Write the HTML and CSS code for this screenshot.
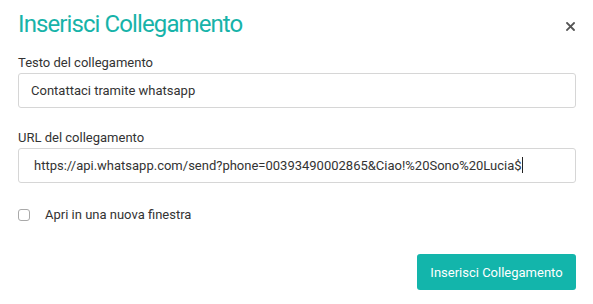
FILE: index.html
```html
<!doctype html>
<html lang="it">

<head>
  <meta charset="utf-8">
  <title>Inserisci Collegamento</title>
  <link rel="stylesheet" href="styles.css">
</head>

<body>
  <div class="dialog">
    <div class="dialog-head">
      <h2 class="title">Inserisci Collegamento</h2>
      <span class="close" title="Chiudi">
        <svg width="9" height="9" viewBox="0 0 9 9">
          <path d="M1 1 L8 8 M8 1 L1 8" stroke="#555" stroke-width="1.8" stroke-linecap="square" />
        </svg>
      </span>
    </div>

    <div class="group first">
      <label class="label">Testo del collegamento</label>
      <div class="field">Contattaci tramite whatsapp</div>
    </div>

    <div class="group">
      <label class="label">URL del collegamento</label>
      <div class="field url">https://api.whatsapp.com/send?phone=00393490002865&amp;Ciao!%20Sono%20Lucia$<span class="caret"></span></div>
    </div>

    <div class="check">
      <span class="box"></span>
      <span>Apri in una nuova finestra</span>
    </div>

    <div class="actions">
      <button class="submit" type="button">Inserisci Collegamento</button>
    </div>
  </div>
</body>

</html>
```

FILE: styles.css
```css
body {
  margin: 0;
  background: #fff;
  font-family: Roboto, "Noto Sans", sans-serif;
  color: #333;
}

.dialog {
  padding: 8px 17px 14px 18px;
}

.dialog-head {
  display: flex;
  justify-content: space-between;
  align-items: center;
}

.title {
  margin: 0;
  font-size: 24px;
  font-weight: 400;
  line-height: 32px;
  letter-spacing: -0.9px;
  color: #17b3a9;
}

.close {
  display: flex;
  margin-right: 1px;
  margin-top: 4px;
}

.group {
  margin-top: 22px;
}

.group.first {
  margin-top: 15px;
}

.label {
  display: block;
  font-size: 13px;
  line-height: 16px;
  margin-bottom: 2px;
}

.field {
  height: 35px;
  box-sizing: border-box;
  border: 1px solid #d6d6d6;
  border-radius: 3px;
  padding: 0 12px;
  font-size: 13px;
  line-height: 33px;
  white-space: nowrap;
  overflow: hidden;
}

.field.url {
  padding-left: 15px;
}

.caret {
  display: inline-block;
  width: 1px;
  height: 16px;
  background: #222;
  vertical-align: -3px;
}

.check {
  display: flex;
  align-items: center;
  gap: 15px;
  margin-top: 24px;
  font-size: 13px;
}

.box {
  width: 10px;
  height: 10px;
  border: 1px solid #a9a9a9;
  border-radius: 3px;
}

.actions {
  display: flex;
  justify-content: flex-end;
  margin-top: 32px;
}

.submit {
  background: #13b5ab;
  color: #fff;
  border: none;
  border-radius: 3px;
  width: 159px;
  height: 36px;
  font-family: inherit;
  font-size: 13px;
}
```
